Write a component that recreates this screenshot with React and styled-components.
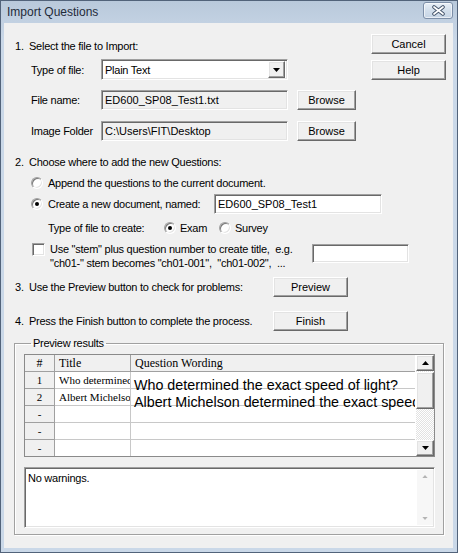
import React from "react";
import styled, { createGlobalStyle } from "styled-components";

const GlobalStyle = createGlobalStyle`
  html, body {
    margin: 0;
    padding: 0;
    background: #fff;
  }
  body {
    font-family: "Liberation Sans", Arial, sans-serif;
    font-size: 11px;
    color: #000;
  }
  * {
    box-sizing: border-box;
  }
`;

const Window = styled.div`
  width: 458px;
  height: 553px;
  display: flex;
  flex-direction: column;
  border: 1px solid #52637a;
  background: linear-gradient(#b9c9db, #cad8e8 40px, #cad8e8);
  overflow: hidden;
`;

const TitleBar = styled.div`
  height: 22px;
  flex: 0 0 22px;
  display: flex;
  align-items: center;
  justify-content: space-between;
  padding: 0 4px 0 6px;
`;

const Title = styled.span`
  font-size: 12px;
  color: #1f2b3a;
`;

const CloseButton = styled.div`
  width: 30px;
  height: 17px;
  margin-top: -3px;
  display: flex;
  align-items: center;
  justify-content: center;
  border: 1px solid #7d8fa8;
  border-radius: 3px;
  background: linear-gradient(#e8eff7, #d3dfec 50%, #c6d4e5);
  box-shadow: inset 0 0 0 1px rgba(255, 255, 255, 0.6);
`;

const Content = styled.div`
  flex: 1;
  margin: 0 4px 4px 3px;
  padding: 0 7px 0 10px;
  background: #f0f0f0;
  display: flex;
  flex-direction: column;
`;

const TopSection = styled.div`
  display: flex;
`;

const LeftCol = styled.div`
  flex: 1;
  display: flex;
  flex-direction: column;
`;

const RightCol = styled.div`
  width: 75px;
  padding-top: 11px;
  display: flex;
  flex-direction: column;
  gap: 6px;
`;

const Text = styled.span`
  letter-spacing: -0.25px;
  white-space: pre;
`;

const StepRow = styled.div`
  display: flex;
  align-items: center;
  height: ${p => p.$h || 18}px;
  margin-top: ${p => p.$mt || 0}px;
  padding-left: 1px;
`;

const StepNum = styled.span`
  width: 14px;
  flex: 0 0 14px;
`;

const StepText = styled(Text)`
  flex: 0 0 ${p => p.$w || 0}px;
`;

const FieldRow = styled.div`
  display: flex;
  align-items: ${p => p.$align || "center"};
  height: ${p => p.$h || 20}px;
  margin-top: ${p => p.$mt || 0}px;
  padding-left: ${p => p.$pl || 17}px;
`;

const FieldLabel = styled(Text)`
  width: ${p => p.$w || 70}px;
  flex: 0 0 ${p => p.$w || 70}px;
`;

const Raised = styled.div`
  background: #f0f0f0;
  border: 1px solid;
  border-color: #fff #696969 #696969 #fff;
  box-shadow: inset -1px -1px #a0a0a0, inset 1px 1px #e3e3e3;
`;

const Button = styled(Raised)`
  width: ${p => p.$w || 75}px;
  height: ${p => p.$h || 20}px;
  margin-left: ${p => p.$ml || 0}px;
  display: flex;
  align-items: center;
  justify-content: center;
  font-size: 11px;
`;

const Sunken = styled.div`
  border: 1px solid;
  border-color: #a0a0a0 #fff #fff #a0a0a0;
  box-shadow: inset 1px 1px #696969, inset -1px -1px #e3e3e3;
`;

const Field = styled(Sunken)`
  width: ${p => p.$w}px;
  height: ${p => p.$h || 20}px;
  margin-top: ${p => p.$mt || 0}px;
  margin-left: ${p => p.$ml || 0}px;
  background: ${p => (p.$readOnly ? "#f0f0f0" : "#fff")};
  display: flex;
  align-items: center;
  padding-left: 3px;
  white-space: pre;
`;

const SelectBox = styled(Field)`
  padding-right: 2px;
  justify-content: space-between;
`;

const DropButton = styled(Raised)`
  width: 17px;
  height: 17px;
  display: flex;
  align-items: center;
  justify-content: center;
`;

const RadioCircle = styled.span`
  position: relative;
  width: 12px;
  height: 12px;
  flex: 0 0 12px;
  border-radius: 50%;
  border: 1px solid;
  border-color: #a0a0a0 #fff #fff #a0a0a0;
  box-shadow: inset 1px 1px #7a7a7a, inset -1px -1px #e3e3e3;
  background: #fff;
  margin-right: ${p => p.$gap || 5}px;
  &::after {
    content: "";
    display: ${p => (p.$on ? "block" : "none")};
    position: absolute;
    left: 3px;
    top: 3px;
    width: 4px;
    height: 4px;
    border-radius: 50%;
    background: #000;
  }
`;

const Option = styled.span`
  display: flex;
  align-items: center;
  width: ${p => p.$w}px;
  flex: 0 0 ${p => p.$w}px;
`;

const CheckBox = styled(Sunken)`
  width: 13px;
  height: 13px;
  flex: 0 0 13px;
  margin-top: 1px;
  margin-right: 5px;
  background: #fff;
`;

const CheckText = styled(Text)`
  width: 258px;
  flex: 0 0 258px;
  line-height: 14px;
`;

const GroupBox = styled.fieldset`
  margin: 6px 2px 0 0;
  padding: 4px 8px 6px 9px;
  border: 1px solid #a0a0a0;
  box-shadow: inset 1px 1px #fff, 1px 1px #fff;
  display: flex;
  flex-direction: column;
  gap: 10px;
  min-width: 0;
`;

const Legend = styled.legend`
  margin-left: 7px;
  padding: 0 2px;
  line-height: 13px;
  letter-spacing: -0.25px;
`;

const Grid = styled.div`
  display: flex;
  height: 103px;
  border: 1px solid #8a8a8a;
  background: #fff;
  overflow: hidden;
`;

const Table = styled.div`
  flex: 1;
  display: grid;
  grid-template-columns: 30px 76px 1fr;
  grid-template-rows: 17px repeat(5, 17px);
  overflow: hidden;
  margin-right: 1px;
`;

const Cell = styled.div`
  border-right: 1px solid ${p => (p.$head ? "#a0a0a0" : "#c8c8c8")};
  border-bottom: 1px solid ${p => (p.$head ? "#a0a0a0" : "#c8c8c8")};
  background: ${p => (p.$head ? "#f0f0f0" : "transparent")};
  font-family: ${p =>
    p.$big ? '"Liberation Sans", Arial, sans-serif' : '"Liberation Serif", "Times New Roman", serif'};
  font-size: ${p => (p.$big ? "14.3px" : p.$hdr ? "12px" : "11px")};
  white-space: nowrap;
  overflow-x: clip;
  overflow-y: ${p => (p.$big ? "visible" : "clip")};
  display: flex;
  align-items: ${p => (p.$big ? "flex-start" : "center")};
  justify-content: ${p => (p.$center ? "center" : "flex-start")};
  padding-left: ${p => (p.$center ? 0 : p.$big ? 3 : 4)}px;
  padding-top: ${p => (p.$big ? 6 : 0)}px;
  line-height: 1;
`;

const ScrollBar = styled.div`
  width: 18px;
  flex: 0 0 18px;
  display: flex;
  flex-direction: column;
  background: repeating-conic-gradient(#fff 0 25%, #e2e2e2 0 50%) 0 0 / 2px 2px;
`;

const ScrollBtn = styled(Raised)`
  height: 16px;
  flex: 0 0 16px;
  display: flex;
  align-items: center;
  justify-content: center;
`;

const Thumb = styled(Raised)`
  height: 37px;
  flex: 0 0 37px;
  margin-top: 1px;
`;

const Track = styled.div`
  flex: 1;
`;

const Memo = styled(Sunken)`
  height: 61px;
  background: #fff;
  display: flex;
`;

const MemoText = styled(Text)`
  flex: 1;
  padding: 4px 0 0 3px;
`;

const MemoRail = styled.div`
  width: 16px;
  margin: 2px 1px 2px 0;
  background: #f7f7f7;
  display: flex;
  flex-direction: column;
  justify-content: space-between;
  align-items: center;
  padding: 5px 0;
`;

const Arrow = ({ down, color = "#000", w = 7 }) => (
  <svg width={w} height={Math.ceil(w / 2)} viewBox="0 0 7 4">
    <path d={down ? "M0 0 H7 L3.5 4 Z" : "M0 4 H7 L3.5 0 Z"} fill={color} />
  </svg>
);

const CloseIcon = () => (
  <svg width="15" height="11" viewBox="0 0 15 11">
    <path d="M3 2 L12 9 M12 2 L3 9" stroke="#44546b" strokeWidth="3.6" strokeLinecap="round" />
    <path d="M3 2 L12 9 M12 2 L3 9" stroke="#fff" strokeWidth="1.7" strokeLinecap="round" />
  </svg>
);

const rows = [
  ["1", "Who determined the exact speed of light?", "Who determined the exact speed of light?"],
  ["2", "Albert Michelson determined the exact speed", "Albert Michelson determined the exact speed of light"],
  ["-", "", ""],
  ["-", "", ""],
  ["-", "", ""]
];

const App = () => (
  <>
    <GlobalStyle />
    <Window>
      <TitleBar>
        <Title>Import Questions</Title>
        <CloseButton>
          <CloseIcon />
        </CloseButton>
      </TitleBar>
      <Content>
        <TopSection>
          <LeftCol>
            <StepRow $mt={14}>
              <StepNum>1.</StepNum>
              <Text>Select the file to Import:</Text>
            </StepRow>
            <FieldRow $mt={4} $h={21}>
              <FieldLabel>Type of file:</FieldLabel>
              <SelectBox $w={187} $h={21}>
                <Text>Plain Text</Text>
                <DropButton>
                  <Arrow down />
                </DropButton>
              </SelectBox>
            </FieldRow>
            <FieldRow $mt={10}>
              <FieldLabel>File name:</FieldLabel>
              <Field $w={187} $readOnly>
                ED600_SP08_Test1.txt
              </Field>
              <Button $w={59} $ml={9}>
                Browse
              </Button>
            </FieldRow>
            <FieldRow $mt={11}>
              <FieldLabel>Image Folder</FieldLabel>
              <Field $w={187} $readOnly>
                C:\Users\FIT\Desktop
              </Field>
              <Button $w={59} $ml={9}>
                Browse
              </Button>
            </FieldRow>
          </LeftCol>
          <RightCol>
            <Button>Cancel</Button>
            <Button>Help</Button>
          </RightCol>
        </TopSection>

        <StepRow $mt={12}>
          <StepNum>2.</StepNum>
          <Text>Choose where to add the new Questions:</Text>
        </StepRow>
        <FieldRow $mt={3} $h={18}>
          <RadioCircle />
          <Text>Append the questions to the current document.</Text>
        </FieldRow>
        <FieldRow $mt={2}>
          <RadioCircle $on />
          <FieldLabel $w={166}>Create a new document, named:</FieldLabel>
          <Field $w={168}>ED600_SP08_Test1</Field>
        </FieldRow>
        <FieldRow $mt={5} $h={18} $pl={34}>
          <FieldLabel $w={116}>Type of file to create:</FieldLabel>
          <Option $w={55}>
            <RadioCircle $on $gap={4} />
            <Text>Exam</Text>
          </Option>
          <Option $w={60}>
            <RadioCircle $gap={4} />
            <Text>Survey</Text>
          </Option>
        </FieldRow>
        <FieldRow $mt={5} $h={28} $pl={18} $align="flex-start">
          <CheckBox />
          <CheckText>
            {'Use "stem" plus question number to create title,  e.g.\n"ch01-" stem becomes "ch01-001",  "ch01-002",  ...'}
          </CheckText>
          <Field $w={97} $h={19} $mt={2} $ml={4} />
        </FieldRow>

        <StepRow $mt={7} $h={20}>
          <StepNum>3.</StepNum>
          <StepText $w={244}>Use the Preview button to check for problems:</StepText>
          <Button>Preview</Button>
        </StepRow>
        <StepRow $mt={14} $h={20}>
          <StepNum>4.</StepNum>
          <StepText $w={244}>Press the Finish button to complete the process.</StepText>
          <Button>Finish</Button>
        </StepRow>

        <GroupBox>
          <Legend>Preview results</Legend>
          <Grid>
            <Table>
              <Cell $head $center $hdr>#</Cell>
              <Cell $head $hdr>Title</Cell>
              <Cell $head $hdr>Question Wording</Cell>
              {rows.map(([n, t, q], i) => (
                <React.Fragment key={i}>
                  <Cell $head $center>{n}</Cell>
                  <Cell>{t}</Cell>
                  <Cell $big>{q}</Cell>
                </React.Fragment>
              ))}
            </Table>
            <ScrollBar>
              <ScrollBtn>
                <Arrow />
              </ScrollBtn>
              <Thumb />
              <Track />
              <ScrollBtn>
                <Arrow down />
              </ScrollBtn>
            </ScrollBar>
          </Grid>
          <Memo>
            <MemoText>No warnings.</MemoText>
            <MemoRail>
              <Arrow color="#b4b4b4" w={6} />
              <Arrow down color="#b4b4b4" w={6} />
            </MemoRail>
          </Memo>
        </GroupBox>
      </Content>
    </Window>
  </>
);

export default App;
